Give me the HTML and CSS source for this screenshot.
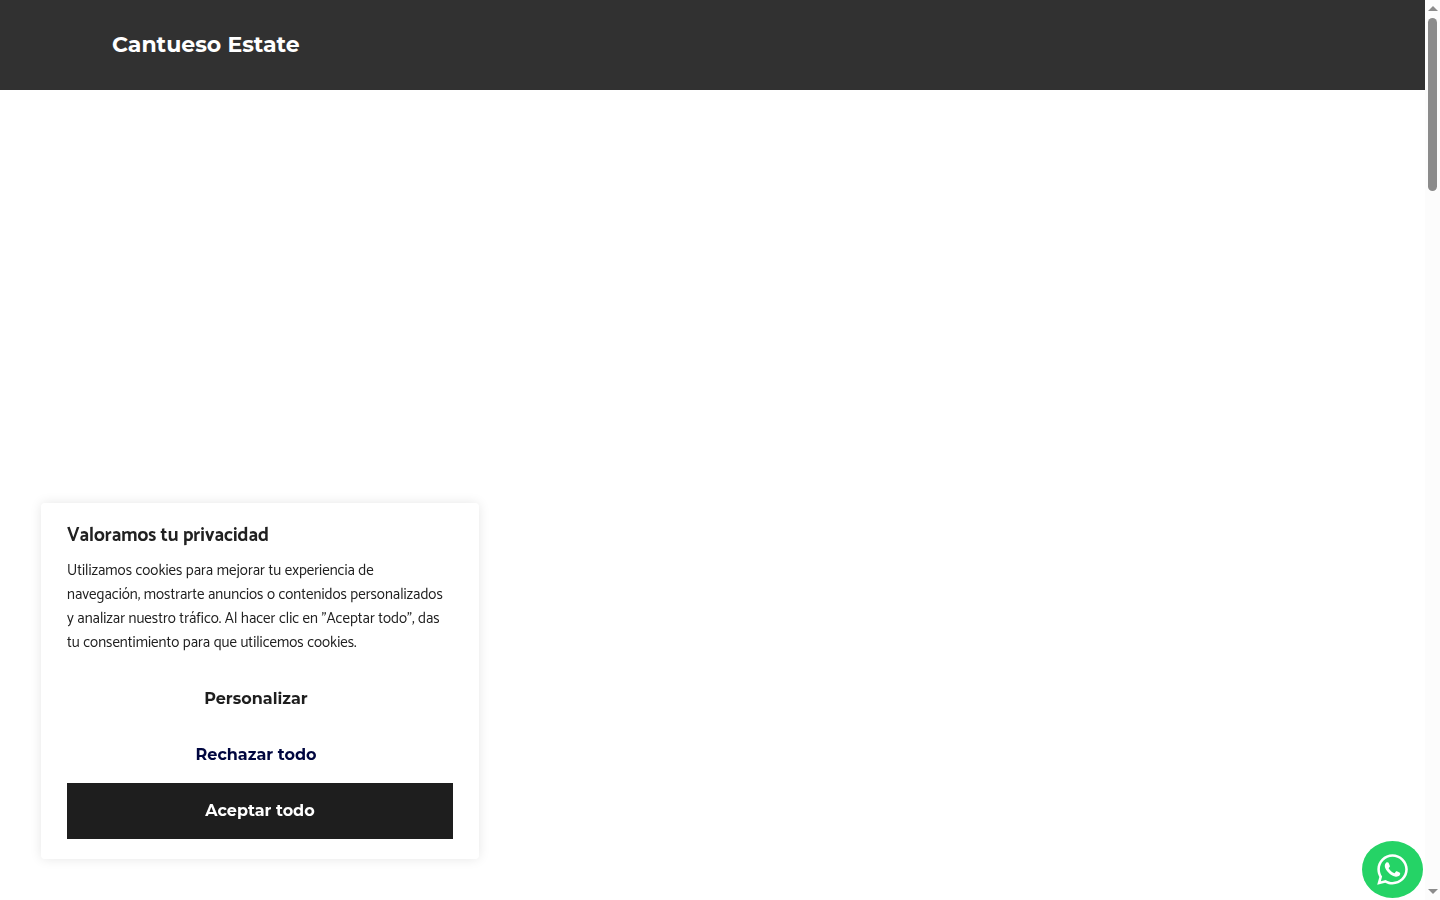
FILE: index.html
```html
<!DOCTYPE html>
<html lang="es">
<head>
    <meta charset="UTF-8">
    <meta name="viewport" content="width=device-width, initial-scale=1.0">
    <title>Cantueso Estate</title>
    <link rel="stylesheet" href="styles.css">
</head>
<body>
    <div class="page">
        <header class="site-header">
            <a class="brand" href="#">Cantueso Estate</a>
        </header>
        <main class="content"></main>
    </div>

    <div class="scrollbar" aria-hidden="true">
        <svg class="arrow" viewBox="0 0 10 5"><path d="M5 0l5 5H0z"/></svg>
        <div class="track"><div class="thumb"></div></div>
        <svg class="arrow" viewBox="0 0 10 5"><path d="M0 0h10L5 5z"/></svg>
    </div>

    <section class="consent" aria-labelledby="consentTitle">
        <h2 class="consent-title" id="consentTitle">Valoramos tu privacidad</h2>
        <p class="consent-text">Utilizamos cookies para mejorar tu experiencia de<br>
            navegación, mostrarte anuncios o contenidos personalizados<br>
            y analizar nuestro tráfico. Al hacer clic en "Aceptar todo", das<br>
            tu consentimiento para que utilicemos cookies.</p>
        <div class="consent-buttons">
            <button class="btn btn-customize" type="button">Personalizar</button>
            <button class="btn btn-reject" type="button">Rechazar todo</button>
            <button class="btn btn-accept" type="button">Aceptar todo</button>
        </div>
    </section>

    <a class="whatsapp" href="#" aria-label="WhatsApp">
        <svg viewBox="0 0 448 512" width="31" height="35"><path fill="currentColor" d="M380.9 97.1C339 55.1 283.2 32 223.9 32c-122.4 0-222 99.6-222 222 0 39.1 10.2 77.3 29.6 111L0 480l117.7-30.9c32.4 17.7 68.9 27 106.1 27h.1c122.3 0 224.1-99.6 224.1-222 0-59.3-25.2-115-67.1-157zm-157 341.6c-33.2 0-65.7-8.9-94-25.7l-6.7-4-69.8 18.3L72 359.2l-4.4-7c-18.5-29.4-28.2-63.3-28.2-98.2 0-101.7 82.8-184.5 184.6-184.5 49.3 0 95.6 19.2 130.4 54.1 34.8 34.9 56.2 81.2 56.1 130.5 0 101.8-84.9 184.6-186.6 184.6zm101.2-138.2c-5.5-2.8-32.8-16.2-37.9-18-5.1-1.9-8.8-2.8-12.5 2.8-3.7 5.6-14.3 18-17.6 21.8-3.2 3.7-6.5 4.2-12 1.4-32.6-16.3-54-29.1-75.5-66-5.7-9.8 5.7-9.1 16.3-30.3 1.8-3.7.9-6.9-.5-9.7-1.4-2.8-12.5-30.1-17.1-41.2-4.5-10.8-9.1-9.3-12.5-9.5-3.2-.2-6.9-.2-10.6-.2-3.7 0-9.7 1.4-14.8 6.9-5.1 5.6-19.4 19-19.4 46.3 0 27.3 19.9 53.7 22.6 57.4 2.8 3.7 39.1 59.7 94.8 83.8 35.2 15.2 49 16.5 66.6 13.9 10.7-1.6 32.8-13.4 37.4-26.4 4.6-13 4.6-24.1 3.2-26.4-1.3-2.5-5-3.9-10.5-6.6z"/></svg>
    </a>
</body>
</html>
```
FILE: styles.css
```css
* {
    box-sizing: border-box;
}

body {
    display: flex;
    margin: 0;
    min-height: 100vh;
    background: #fff;
    font-family: Catamaran, Lato, sans-serif;
    color: #212121;
}

.page {
    flex: 1;
}

.site-header {
    display: flex;
    align-items: center;
    height: 90px;
    padding: 0 112px 2px;
    background: #313131;
}

.brand {
    color: #fff;
    font-family: Montserrat, Inter, sans-serif;
    font-size: 22px;
    font-weight: 700;
    text-decoration: none;
}

.scrollbar {
    display: flex;
    flex-direction: column;
    align-items: center;
    width: 15px;
    height: 100vh;
    padding: 6px 0;
    background: #fcfcfc;
}

.arrow {
    width: 10px;
    height: 5px;
    fill: #8b8b8b;
}

.track {
    flex: 1;
    padding: 7px 0;
}

.thumb {
    width: 9px;
    height: 20%;
    border-radius: 5px;
    background: #8b8b8b;
}

.consent {
    position: fixed;
    left: 41px;
    bottom: 41px;
    width: 438px;
    padding: 22px 26px 20px;
    border-radius: 4px;
    background: #fff;
    box-shadow: 0 0 12px rgba(0, 0, 0, 0.1);
}

.consent-title {
    margin: 0 0 12px;
    font-size: 19px;
    line-height: 22px;
}

.consent-text {
    margin: 0 0 16px;
    font-size: 15px;
    line-height: 24px;
}

.consent-buttons {
    display: flex;
    flex-direction: column;
}

.btn {
    height: 56px;
    margin: 0;
    padding: 0 8px 2px;
    border: none;
    background: transparent;
    font-family: Montserrat, Inter, sans-serif;
    font-size: 16px;
    font-weight: 700;
    cursor: pointer;
}

.btn-customize,
.btn-reject {
    margin-right: 8px;
}

.btn-customize {
    color: #1e1e1e;
}

.btn-reject {
    color: #00063f;
}

.btn-accept {
    background: #1e1e1e;
    color: #fff;
}

.whatsapp {
    position: fixed;
    right: 17px;
    bottom: 2px;
    display: flex;
    align-items: center;
    justify-content: center;
    width: 61px;
    height: 57px;
    border-radius: 50%;
    background: #25d366;
    color: #fff;
}
```
